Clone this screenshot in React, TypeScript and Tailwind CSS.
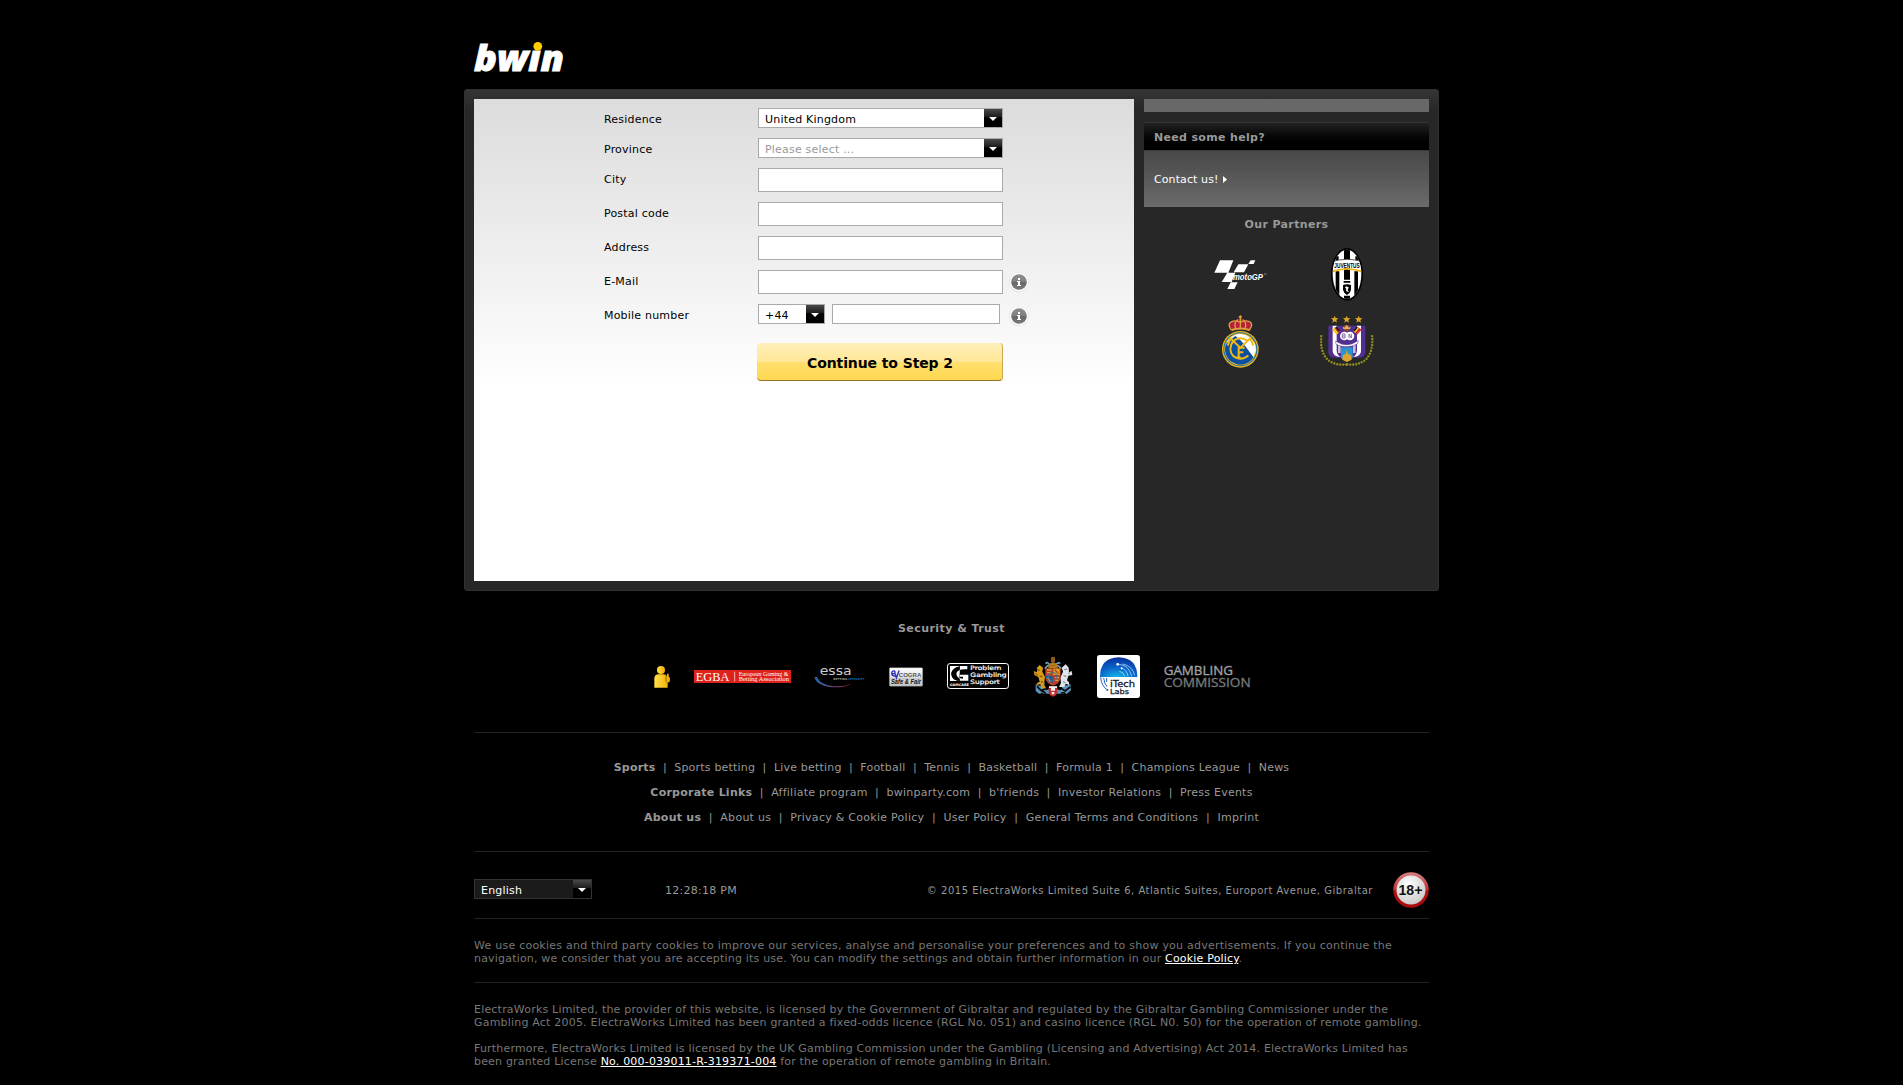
import { type ReactNode } from 'react';

function Arrow() {
  return (
    <span className="flex w-[18px] shrink-0 items-center justify-center bg-linear-to-b from-[#4a4a4a] from-0% via-[#1c1c1c] via-45% to-black to-50%">
      <svg className="mt-px" width="8" height="4" viewBox="0 0 8 4"><path d="M0 0h8L4 4z" fill="#fff" /></svg>
    </span>
  );
}

function Select({ width, text, tone }: { width: string; text: string; tone: string }) {
  return (
    <div className={`flex h-5 border ${width} ${tone}`}>
      <span className="flex-1 pl-1.5 leading-[21px]">{text}</span>
      <Arrow />
    </div>
  );
}

function Info() {
  return (
    <svg className="ml-1.5 mt-0.5 shrink-0" width="20" height="20" viewBox="0 0 20 20">
      <defs>
        <linearGradient id="info" x1="0" y1="0" x2="0" y2="1">
          <stop offset="0" stopColor="#8e8e8e" /><stop offset=".5" stopColor="#7f7f7f" /><stop offset=".52" stopColor="#686868" /><stop offset="1" stopColor="#7a7a7a" />
        </linearGradient>
      </defs>
      <circle cx="10" cy="10.3" r="9.7" fill="#dcdcdc" />
      <circle cx="10" cy="10" r="9.2" fill="#fff" />
      <circle cx="10" cy="10" r="7.800" fill="url(#info)" />
      <path d="M9 6h2v2H9zM8 9h3v4h1v1H8v-1h1v-3H8z" fill="#fff" />
    </svg>
  );
}

function Row({ label, children }: { label: string; children: ReactNode }) {
  return (
    <div className="flex">
      <span className="h-5 w-[154px] leading-[23px]">{label}</span>
      {children}
    </div>
  );
}

function Input({ size }: { size: string }) {
  return <div className={`border border-[#aaa] bg-white ${size}`} />;
}

function BwinLogo() {
  return (
    <svg className="overflow-visible" width="92" height="32" viewBox="0 0 92 32">
      <text x="0" y="30.200" fontFamily="'Open Sans'" fontWeight="800" fontStyle="italic" fontSize="36" textLength="90" lengthAdjust="spacingAndGlyphs" fill="#fff" stroke="#fff" strokeWidth=".8" letterSpacing="0">bwın</text>
      <circle cx="63.800" cy="5.300" r="4.400" fill="#fc0" />
    </svg>
  );
}

function MotoGP() {
  return (
    <svg className="-ml-0.5" width="53" height="30" viewBox="282 540 159 90">
      <path d="M300 541h40l-15 37h-42zM322 578h24l-11 28h-30zM355 553h30l-13 24h-31zM392 541h14l-5 11h-16zM332 607h21l-10 20h-21z" fill="#fff" />
      <text x="339" y="599" fontFamily="'Liberation Sans'" fontWeight="700" fontStyle="italic" fontSize="25" textLength="90" lengthAdjust="spacingAndGlyphs" letterSpacing="0" fill="#fff">motoGP</text>
      <path d="M432 582h8" stroke="#aaa" strokeWidth="2" />
    </svg>
  );
}

function Juventus() {
  return (
    <svg className="overflow-visible" width="32" height="53" viewBox="633 505 96 159">
      <defs><clipPath id="juv"><ellipse cx="681" cy="584" rx="43" ry="74" /></clipPath></defs>
      <ellipse cx="681" cy="584" rx="48" ry="79" fill="#000" />
      <g clipPath="url(#juv)">
        <path d="M630 500h100v170H630z" fill="#fff" />
        <path d="M647 575h11v80h-11zM672 500h18v170h-18zM703 575h11v80h-11zM647 530h9v15h-9zM706 530h9v15h-9z" fill="#000" />
        <path d="M632 546q49-16 98 0v28q-49-16-98 0z" fill="#fff" />
        <path d="M632 577q49-19 98 0" fill="none" stroke="#f3b61f" strokeWidth="5" />
        <path d="M668 600h26v48h-26z" fill="#fff" />
        <path d="M636 546q45-14 90 0" fill="none" stroke="#000" strokeWidth="2" />
      </g>
      <text x="643" y="564" fontFamily="'Liberation Sans'" fontWeight="700" fontSize="19" textLength="76" lengthAdjust="spacingAndGlyphs" letterSpacing="0" fill="#000">JUVENTUS</text>
      <path d="M671 604h20v5h-20zM669 616q12-4 24 0v14q-2 10-12 16-10-6-12-16z" fill="#000" />
      <path d="M678 620l8 3-3 9 4 6-9-4 1-7-4-3z" fill="#fff" />
    </svg>
  );
}

function RealMadrid() {
  return (
    <svg className="-ml-px" width="37" height="53" viewBox="306 705 111 159">
      <defs><clipPath id="rm"><circle cx="361" cy="808" r="46" /></clipPath></defs>
      <path d="M334 752q-14-20 1-26 12-8 26-10 14 2 27 10 15 6 0 26-27-7-54 0z" fill="#b5203a" />
      <path d="M334 751q-14-20 1-26 10-6 26 2 15-8 27-2 14 6 0 26M348 748q-9-20 6-29M374 748q9-20-6-29M361 748v-42M356 711h10" fill="none" stroke="#dba43c" strokeWidth="4" />
      <path d="M335 750q26-9 53 0" fill="none" stroke="#dba43c" strokeWidth="6" />
      <circle cx="361" cy="808" r="55" fill="#e8b61c" />
      <circle cx="361" cy="808" r="51" fill="#1c6cab" />
      <circle cx="361" cy="808" r="48" fill="#f2bd1c" />
      <circle cx="361" cy="808" r="45" fill="#fff" />
      <g clipPath="url(#rm)"><path d="M312 796l38-32 66 88-42 12-66-30z" fill="#0b4f9e" /><path d="M336 760h24l50 36v24z" fill="#fff" /></g>
      <g fill="none" stroke="#f0b91b" strokeWidth="6">
        <path d="M323 797l8-22 30 28 30-28 9 22" /><path d="M383 783q-12-10-26-8-25 5-26 32 2 27 30 29 14 0 24-10" /><path d="M356 832v-29h18M356 817h14M350 832h12" />
      </g>
    </svg>
  );
}

function Anderlecht() {
  const star = 'l3 7 8 1-6 5 2 8-7-4-7 4 2-8-6-5 8-1z';
  return (
    <svg width="54" height="53" viewBox="602 706 162 159">
      <path d={`M646 708${star}M682 708${star}M718 708${star}`} fill="#dca52c" />
      <path d="M627 738h111v78q0 18-20 18h-71q-20 0-20-18z" fill="#532e91" />
      <path d="M640 738h12v74q0 14 12 20-24-1-24-18zM713 738h12v76q0 17-24 18 12-6 12-20z" fill="#fff" />
      <path d="M656 790h8v30h-8zM701 790h8v30h-8z" fill="#c9bfe0" />
      <path d="M638 750l10-7 12 14-8 8z" fill="#e6cf2c" /><path d="M645 744l8-2 10 13-6 5z" fill="#d82b2b" />
      <path d="M727 750l-10-7-12 14 8 8z" fill="#d82b2b" /><path d="M720 744l-8-2-10 13 6 5z" fill="#e6cf2c" />
      <path d="M650 742l10 12M714 742l-10 12" stroke="#181018" strokeWidth="4" />
      <circle cx="682" cy="745" r="10" fill="#8f4a2a" /><path d="M672 748h20l2-7-6 3-6-8-6 8-6-3z" fill="#e1b46a" />
      <circle cx="675" cy="769" r="13" fill="#fff" /><circle cx="692" cy="769" r="13" fill="#fff" />
      <path d="M649 784q34 24 68-2l-2 10q-32 18-65 2z" fill="#fff" stroke="#532e91" strokeWidth="1.5" />
      <path d="M669 763h8v12h-8zM669 769h7M689 776v-13l7 12v-13" fill="none" stroke="#70539f" strokeWidth="2.500" />
      <path d="M665 803h35v33q-17 14-35 0z" fill="#2994cf" />
      <path d="M669 840l2-14 8-3 3-12 4 12 9 3 2 14-14 7z" fill="#dfa52f" />
      <path d="M606 767q-5 45 16 70 22 22 60 17M758 767q5 45-16 70-22 22-60 17" fill="none" stroke="#66661c" strokeWidth="3" />
      <path d="M606 767q-5 45 16 70 22 22 60 17M758 767q5 45-16 70-22 22-60 17" fill="none" stroke="#a39e1f" strokeWidth="7" strokeDasharray="4 5" />
    </svg>
  );
}

function Person() {
  return (
    <svg width="16" height="22" viewBox="70 166 48 66">
      <defs><linearGradient id="per"><stop offset="0" stopColor="#ffe24a" /><stop offset="1" stopColor="#f2a900" /></linearGradient></defs>
      <circle cx="91" cy="178" r="12" fill="url(#per)" />
      <path d="M71 231v-28q1-12 13-12h14q10 0 11 8v-10h5v8q5 4 4 12-1 8-7 7v15z" fill="url(#per)" />
      <path d="M106 194v18q4 7 10 3" fill="none" stroke="#6b4b00" strokeWidth="2" />
    </svg>
  );
}

function Egba() {
  return (
    <svg width="97" height="13" viewBox="192 180 291 39">
      <path d="M192 180h291v39H192z" fill="#de2119" />
      <g fontFamily="'Liberation Serif'" fill="#fff" letterSpacing="0">
        <text x="197" y="213" fontSize="36" textLength="101" lengthAdjust="spacingAndGlyphs">EGBA</text>
        <text x="326" y="197" fontSize="17" textLength="149" lengthAdjust="spacingAndGlyphs">European Gaming &amp;</text>
        <text x="326" y="214" fontSize="17" textLength="151" lengthAdjust="spacingAndGlyphs">Betting Association</text>
      </g>
      <path d="M314 185v29" stroke="#fff" strokeWidth="2" />
    </svg>
  );
}

function Essa() {
  return (
    <svg className="-ml-px overflow-visible" width="51" height="22" viewBox="554 165 153 66">
      <defs><linearGradient id="es"><stop offset="0" stopColor="#1a66ae" /><stop offset=".45" stopColor="#6b4a8c" /><stop offset="1" stopColor="#a01020" /></linearGradient></defs>
      <g fontFamily="'DejaVu Sans'" letterSpacing="0">
        <text x="571" y="193" fontSize="39" textLength="96" lengthAdjust="spacingAndGlyphs" fill="#ccc">essa</text>
        <text x="612" y="207" fontWeight="700" fontSize="8" textLength="42" lengthAdjust="spacingAndGlyphs" fill="#999">BETTING</text>
        <text x="657" y="207" fontWeight="700" fontSize="8" textLength="48" lengthAdjust="spacingAndGlyphs" fill="#1769b5">INTEGRITY</text>
      </g>
      <path d="M555 198h8q10 24 50 28 30 1 54-8-20 12-54 11-52-4-58-31z" fill="url(#es)" />
    </svg>
  );
}

function Ecogra() {
  return (
    <svg className="overflow-visible" width="34" height="20" viewBox="779 170 101 59">
      <defs><linearGradient id="ec" x1="0" y1="0" x2="0" y2="1"><stop offset="0" stopColor="#fff" /><stop offset="1" stopColor="#c2c2c2" /></linearGradient></defs>
      <rect x="780" y="172" width="99" height="55" rx="3" fill="url(#ec)" stroke="#888" />
      <path d="M781 205h97" stroke="#aaa" strokeWidth="2" />
      <text x="808" y="199" fontFamily="'Liberation Sans'" fontWeight="700" fontSize="18" textLength="67" lengthAdjust="spacingAndGlyphs" letterSpacing="0" fill="#555">COGRA</text>
      <path d="M788 190q12 0 8-8-8-3-9 7 1 9 13 8M796 187l5 15 8-22" fill="none" stroke="#2b2fb5" strokeWidth="4" />
      <text x="785" y="221" fontFamily="'Liberation Sans'" fontWeight="700" fontStyle="italic" fontSize="19" textLength="89" lengthAdjust="spacingAndGlyphs" letterSpacing="0" fill="#111">Safe &amp; Fair</text>
    </svg>
  );
}

function GamCare() {
  return (
    <svg className="-mt-px" width="62" height="26" viewBox="51 159 186 78">
      <rect x="52.500" y="160.500" width="183" height="75" rx="8" fill="#000" stroke="#fff" strokeWidth="3" />
      <path d="M60 168h30q-26 8-26 26 2 18 26 19H60zM90 168h22v10q-32-2-33 14 2 14 20 14v-6h-9v-6h25v18H88" fill="#fff" />
      <path d="M84 172q-18 6-18 20 2 18 24 18" fill="none" stroke="#000" strokeWidth="4" />
      <text x="59" y="228" fontFamily="'DejaVu Sans'" fontWeight="700" fontSize="10" textLength="58" lengthAdjust="spacingAndGlyphs" letterSpacing="0" fill="#fff">GAMCARE</text>
      <g fontFamily="'DejaVu Sans'" fontSize="18" fill="#fff" stroke="#fff" strokeWidth=".6" letterSpacing="0">
        <text x="121" y="181" textLength="93" lengthAdjust="spacingAndGlyphs">Problem</text>
        <text x="121" y="202" textLength="109" lengthAdjust="spacingAndGlyphs">Gambling</text>
        <text x="121" y="223" textLength="88" lengthAdjust="spacingAndGlyphs">Support</text>
      </g>
    </svg>
  );
}

function Arms() {
  return (
    <svg width="40" height="40" viewBox="310 140 120 120">
      <path d="M318 222q10 8 24 2l6 16 22-6 24 6 6-16q14 4 22-4l2 20-12 10h-84l-10-8z" fill="#5d93b8" />
      <path d="M322 228l14 14 14-10M348 250l-12-12M392 232l14 10 16-12M394 250l16-10M332 254l8-6M410 254l-8-6" fill="none" stroke="#05090f" strokeWidth="5" />
      <path d="M348 160q6-8 12 4-10 2-14 12M392 160q-8-6-14 4 12 2 16 12M336 188q-6 18 8 34M402 190q6 18-8 34" fill="none" stroke="#6fa0c4" strokeWidth="5" />
      <path d="M313 182l9 4v-14l8-8 10 8-2 12 8 16-3 22 6 12H336l-4-12-12 2 2-6 8-4-4-14-12-6z" fill="#d99a17" />
      <path d="M322 178l8 2M330 196l8 4M334 214l6 2M318 190l6 4" stroke="#604008" strokeWidth="3" />
      <path d="M426 182l-8 4-1-14-9-10-12 10 4 12-8 18 2 16-6 12h16l4-10 10 4v-8l-6-6 4-14 12-2z" fill="#dfe3ea" />
      <path d="M404 178l8-2M402 196l8 2M400 214l7 3M416 190l5-3" stroke="#66758a" strokeWidth="3" />
      <path d="M347 174h46v28q-3 18-23 24-20-6-23-24z" fill="#b9402a" />
      <path d="M371 175h19v19h-19z" fill="#d9a11f" /><path d="M348 197h21v22q-17-6-21-20z" fill="#1d5b94" />
      <path d="M352 179h14M352 187h14M376 202h12M376 210h10M354 202l8 12" stroke="#d3a32a" strokeWidth="4" />
      <path d="M375 178l11 12" stroke="#c33a1e" strokeWidth="4" />
      <circle cx="369" cy="199" r="13" fill="none" stroke="#3f6f9d" strokeWidth="3" />
      <path d="M356 174q-2-16 14-18 16 2 14 18z" fill="#b87c18" /><path d="M366 142h8v12h-8zM358 166h24" stroke="#a8701f" strokeWidth="3" fill="#8a4a12" />
      <path d="M357 228h26v18q-2 10-13 13-11-3-13-13z" fill="#c42d2d" /><path d="M358 228h24v5h-6v8h-12v-8h-6zM366 245h8v7h-8z" fill="#eee" />
    </svg>
  );
}

function ITech() {
  return (
    <svg width="43" height="43" viewBox="501 135 129 129">
      <defs><radialGradient id="it" cx=".45" cy="1" r="1"><stop offset="0" stopColor="#12b5ea" /><stop offset=".5" stopColor="#0a63c8" /><stop offset="1" stopColor="#07309c" /></radialGradient></defs>
      <rect x="501" y="135" width="129" height="129" rx="8" fill="#fff" />
      <path d="M510 201q0-57 56-59 56 2 56 59z" fill="url(#it)" />
      <g fill="none" stroke="#c9ecff" strokeWidth="2"><path d="M563 163q34 0 42 36" /><path d="M573 174q18 4 21 25" /><path d="M578 162q30 6 36 34" /><path d="M568 184q14 2 16 15" /></g>
      <circle cx="563" cy="163" r="4" fill="#fff" /><circle cx="575" cy="175" r="3" fill="#fff" />
      <path d="M512 202q2 26 20 38M521 204q2 18 10 26M530 204v12" fill="none" stroke="#2364b8" strokeWidth="3" />
      <circle cx="532" cy="240" r="3" fill="#2364b8" />
      <g fontFamily="'DejaVu Sans'" fontSize="25" fill="#10182c" stroke="#10182c" strokeWidth=".8" letterSpacing="0">
        <text x="540" y="232" textLength="75" lengthAdjust="spacingAndGlyphs">iTech</text>
        <text x="540" y="253" fontSize="21" textLength="57" lengthAdjust="spacingAndGlyphs">Labs</text>
      </g>
    </svg>
  );
}

function GamblingCommission() {
  return (
    <svg className="overflow-visible" width="87" height="24" viewBox="701 164 261 72">
      <g fontFamily="'Open Sans'" fontSize="37" letterSpacing="0" strokeWidth="1">
        <text x="700" y="195" textLength="208" lengthAdjust="spacingAndGlyphs" fill="#a0a2a4" stroke="#a0a2a4">GAMBLING</text>
        <text x="700" y="230" textLength="261" lengthAdjust="spacingAndGlyphs" fill="#76797c" stroke="#76797c">COMMISSION</text>
      </g>
    </svg>
  );
}

function Adult() {
  return (
    <svg width="36" height="36" viewBox="0 0 36 36">
      <defs>
        <linearGradient id="ring" x1="0" y1="0" x2="0" y2="1"><stop offset="0" stopColor="#d88080" /><stop offset=".45" stopColor="#c23c3c" /><stop offset=".55" stopColor="#b01010" /><stop offset="1" stopColor="#a80c0c" /></linearGradient>
        <radialGradient id="face" cx=".4" cy=".3" r=".8"><stop offset="0" stopColor="#fff" /><stop offset="1" stopColor="#c4c4c4" /></radialGradient>
      </defs>
      <circle cx="18" cy="18" r="17.800" fill="url(#ring)" />
      <circle cx="18" cy="18" r="14.500" fill="url(#face)" />
      <text x="5.500" y="23" fontFamily="'Liberation Sans'" fontWeight="700" fontSize="15" textLength="24" lengthAdjust="spacingAndGlyphs" letterSpacing="0" fill="#111">18+</text>
    </svg>
  );
}

function LinkRow({ title, links, tracking }: { title: string; links: string[]; tracking: string }) {
  return (
    <div className={`h-[25px] text-center whitespace-pre ${tracking}`}>
      <b>{title}</b>{links.map((l) => <span key={l}>{'  |  '}{l}</span>)}
    </div>
  );
}

export default function App() {
  return (
    <div className="min-h-[1085px] overflow-hidden bg-black font-['DejaVu_Sans',sans-serif] text-[11px] leading-[13px] tracking-[0.2px] text-[#999]">
      <div className="ml-[464px] w-[975px]">
        <header className="h-[89px] pl-2.5 pt-[41px]"><BwinLogo /></header>

        <div className="flex h-[502px] gap-2.5 rounded-[3px] border border-[#303030] bg-[#272727] bg-linear-to-b from-[#353535] to-[#272727] to-[20px] p-[9px]">
          <main className="flex w-[660px] flex-col gap-2.5 bg-linear-to-b from-[#dcdcdc] to-white to-[290px] pl-[130px] pt-[9px] text-black">
            <Row label="Residence"><Select width="w-[245px]" text="United Kingdom" tone="border-[#aaa] bg-white" /></Row>
            <Row label="Province"><Select width="w-[245px]" text="Please select ..." tone="border-[#aaa] bg-white text-[#999]" /></Row>
            <Row label="City"><Input size="h-6 w-[245px]" /></Row>
            <Row label="Postal code"><Input size="h-6 w-[245px]" /></Row>
            <Row label="Address"><Input size="h-6 w-[245px]" /></Row>
            <Row label="E-Mail"><Input size="h-6 w-[245px]" /><Info /></Row>
            <Row label="Mobile number">
              <Select width="w-[67px]" text="+44" tone="border-[#aaa] bg-white" />
              <div className="w-[7px]" />
              <Input size="h-5 w-[168px]" />
              <div className="w-[3px]" />
              <div className="h-5"><Info /></div>
            </Row>
            <button className="ml-[153px] mt-[9px] flex h-[38px] w-[246px] items-center justify-center rounded-[4px] border-b border-r border-b-[#8a7430] border-r-[#c9aa4c] bg-[linear-gradient(#fff0bb,#ffe797_50%,#ffdf70_50%,#ffd84e)] pl-px pt-1 text-[14px] font-bold tracking-[-0.1px] text-black">Continue to Step 2</button>
          </main>

          <aside className="w-[285px]">
            <div className="mb-2.5 h-[13px] bg-[#686868]" />
            <div className="flex h-[29px] items-center border-y border-b-[#3a3a3a] border-t-[#333] bg-linear-to-b from-[#222] to-black pl-2.5 pt-0.5 font-bold tracking-[0.33px]">Need some help?</div>
            <div className="flex h-14 items-center gap-1 bg-linear-to-b from-[#484848] to-[#6b6b6b] pl-2.5 tracking-[0.1px] text-white">
              Contact us!
              <svg width="4" height="7" viewBox="0 0 4 7"><path d="M0 0l4 3.500L0 7z" fill="#fff" /></svg>
            </div>
            <h3 className="mt-[11px] text-center font-bold tracking-[0.37px]">Our Partners</h3>
            <div className="ml-[44px] mt-[17px] grid w-[212px] grid-cols-2 items-center justify-items-center gap-y-[14px]">
              <MotoGP /><Juventus /><RealMadrid /><Anderlecht />
            </div>
          </aside>
        </div>

        <footer className="px-2.5">
          <h3 className="mt-[31px] text-center font-bold tracking-[0.44px]">Security &amp; Trust</h3>
          <div className="ml-[180px] mt-[20px] flex h-[43px] items-center gap-[24px]">
            <Person /><Egba /><Essa /><Ecogra /><GamCare /><Arms /><ITech /><GamblingCommission />
          </div>
          <div className="mt-[34px] h-[120px] border-y border-[#222] pt-[28px]">
            <LinkRow title="Sports" tracking="tracking-[0.2px]" links={['Sports betting', 'Live betting', 'Football', 'Tennis', 'Basketball', 'Formula 1', 'Champions League', 'News']} />
            <LinkRow title="Corporate Links" tracking="tracking-[0.24px]" links={['Affiliate program', 'bwinparty.com', "b'friends", 'Investor Relations', 'Press Events']} />
            <LinkRow title="About us" tracking="tracking-[0.27px]" links={['About us', 'Privacy & Cookie Policy', 'User Policy', 'General Terms and Conditions', 'Imprint']} />
          </div>
          <div className="flex h-[67px] items-center border-b border-[#222] pt-[10px]">
            <Select width="w-[118px]" text="English" tone="border-[#333] bg-[#1b1b1b] text-white -mt-0.5" />
            <span className="ml-[73px] tracking-[0.27px]">12:28:18 PM</span>
            <span className="ml-auto mr-5 mt-px text-[10px] tracking-[0.52px]">© 2015 ElectraWorks Limited Suite 6, Atlantic Suites, Europort Avenue, Gibraltar</span>
            <Adult />
          </div>
          <div className="h-[64px] whitespace-nowrap border-b border-[#222] pt-[20px] text-[#777]">
            <p className="tracking-[0.238px]">We use cookies and third party cookies to improve our services, analyse and personalise your preferences and to show you advertisements. If you continue the</p>
            <p className="tracking-[0.19px]">navigation, we consider that you are accepting its use. You can modify the settings and obtain further information in our <span className="text-white underline">Cookie Policy</span>.</p>
          </div>
          <div className="whitespace-nowrap pt-[20px] text-[#777]">
            <p>ElectraWorks Limited, the provider of this website, is licensed by the Government of Gibraltar and regulated by the Gibraltar Gambling Commissioner under the</p>
            <p>Gambling Act 2005. ElectraWorks Limited has been granted a fixed-odds licence (RGL No. 051) and casino licence (RGL N0. 50) for the operation of remote gambling.</p>
            <p className="mt-[13px] tracking-[0.192px]">Furthermore, ElectraWorks Limited is licensed by the UK Gambling Commission under the Gambling (Licensing and Advertising) Act 2014. ElectraWorks Limited has</p>
            <p className="tracking-[0.187px]">been granted License <span className="text-white underline">No. 000-039011-R-319371-004</span> for the operation of remote gambling in Britain.</p>
          </div>
        </footer>
      </div>
    </div>
  );
}
